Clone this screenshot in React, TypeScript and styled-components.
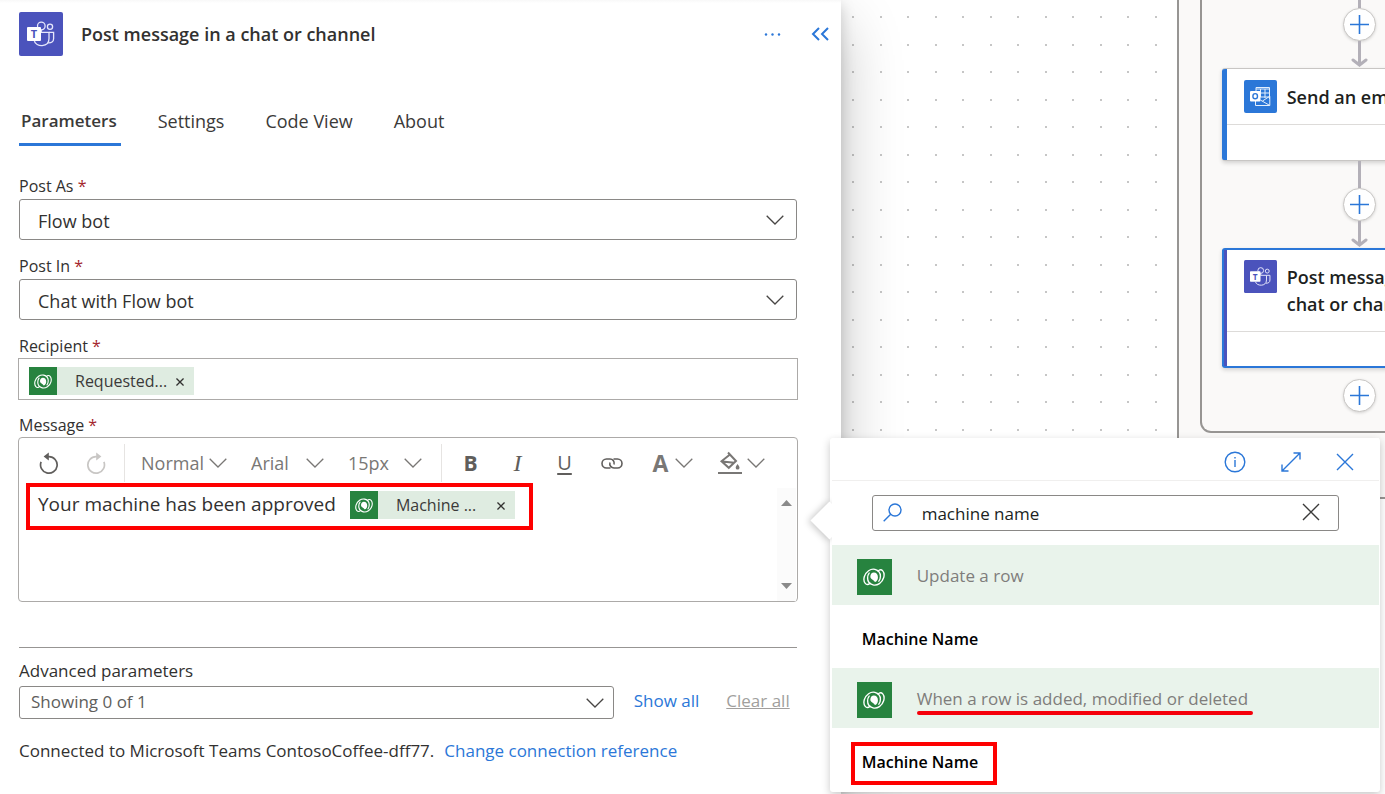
import React from 'react';
import styled, { createGlobalStyle, css } from 'styled-components';

const font = `"Open Sans", "Noto Sans", sans-serif`;
const blue = '#2b77d8';
const green = '#27833f';
const purple = '#4b53bc';

const GlobalStyle = createGlobalStyle`
  *, *::before, *::after { box-sizing: border-box; }
  body {
    margin: 0;
    background: #fff;
    color: #323130;
    font-family: ${font};
    font-size: 17px;
  }
  button, select, input { font: inherit; color: inherit; }
  svg { display: block; flex: none; }
`;

/* ---------- page ---------- */

const Page = styled.div`
  position: relative;
  display: flex;
  min-height: 100vh;
  overflow: hidden;
`;

const Panel = styled.main`
  position: relative;
  z-index: 1;
  flex: 0 0 60.7%;
  min-width: 0;
  background: linear-gradient(#f8f8f8, #fff 3px);
  box-shadow: 0 26px 58px rgba(0, 0, 0, 0.24), 0 5px 14px rgba(0, 0, 0, 0.18);
`;

const PanelHeader = styled.header`
  display: flex;
  align-items: center;
  padding: 12px 12px 0 19px;
`;

const Title = styled.h1`
  flex: 1;
  margin: 0 0 0 18px;
  font-size: 18px;
  font-weight: 600;
  line-height: 24px;
`;

const IconButton = styled.button<{ $ml?: number }>`
  display: flex;
  align-items: center;
  justify-content: center;
  margin: 0 0 0 ${(p) => p.$ml ?? 0}px;
  padding: 0;
  border: 0;
  background: none;
  color: ${blue};
  cursor: pointer;
`;

const Tabs = styled.div`
  display: flex;
  gap: 35px;
  margin: 53px 44px 14px 19px;
`;

const Tab = styled.button<{ $active?: boolean }>`
  padding: 0 4px 10px 2px;
  border: 0;
  border-bottom: 3px solid ${(p) => (p.$active ? blue : 'transparent')};
  background: none;
  color: #3b3a39;
  font-size: ${(p) => (p.$active ? 17 : 18)}px;
  font-weight: ${(p) => (p.$active ? 600 : 400)};
  line-height: 24px;
  cursor: pointer;
`;

/* ---------- form ---------- */

const Form = styled.form`
  padding: 0 44px 24px 19px;
`;

const Field = styled.div`
  display: flex;
  flex-direction: column;
  gap: 2px;
  padding-top: 15px;
`;

const Label = styled.label`
  font-size: 16px;
  line-height: 22px;
`;

const Required = styled.span`
  color: #a4262c;
`;

const SelectBox = styled.div<{ $small?: boolean }>`
  display: grid;
  align-items: center;
  flex: ${(p) => (p.$small ? '1' : 'none')};
  height: ${(p) => (p.$small ? 33 : 41)}px;
  border: 1px solid #8a8886;
  border-radius: 3px;
  > * { grid-area: 1 / 1; }
  > svg {
    justify-self: end;
    margin-right: ${(p) => (p.$small ? 9 : 12)}px;
    pointer-events: none;
  }
`;

const Select = styled.select<{ $small?: boolean }>`
  width: 100%;
  height: 100%;
  padding: ${(p) => (p.$small ? '0 32px 2px 11px' : '2px 32px 0 18px')};
  border: 0;
  background: none;
  color: ${(p) => (p.$small ? '#605e5c' : '#323130')};
  font-size: ${(p) => (p.$small ? 17 : 18)}px;
  appearance: none;
`;

const RichBox = styled.div`
  margin: -1px;
  border: 1px solid #acaaa8;
`;

const RecipientBox = styled(RichBox)`
  height: 42px;
  padding: 8px 10px;
`;

const EditorBox = styled(RichBox)`
  display: flex;
  flex-direction: column;
  height: 165px;
  border-radius: 4px;
`;

const TokenPill = styled.span`
  display: inline-flex;
  align-items: center;
  width: 165px;
  height: 28px;
  background: #dfece1;
  color: #3b3a39;
  font-size: 16px;
  line-height: 28px;
  vertical-align: top;
`;

const TokenIcon = styled.span`
  display: flex;
  align-items: center;
  justify-content: center;
  width: 28px;
  height: 100%;
  background: ${green};
`;

const TokenText = styled.span`
  flex: 1;
  padding-left: 18px;
`;

const TokenRemove = styled.button`
  display: flex;
  margin: 2px 10px 0 0;
  padding: 0;
  border: 0;
  background: none;
`;

const Toolbar = styled.div`
  display: flex;
  align-items: center;
  flex: none;
  height: 50px;
  padding-left: 6px;
  color: #605e5c;
`;

const ToolButton = styled.button<{ $faded?: boolean }>`
  display: flex;
  align-items: center;
  justify-content: center;
  width: 47px;
  height: 32px;
  padding: 0;
  border: 0;
  background: none;
  color: ${(p) => (p.$faded ? '#c8c6c4' : '#605e5c')};
  font-size: 22px;
  line-height: 32px;
`;

const ColorButton = styled(ToolButton)`
  justify-content: flex-start;
  width: 67px;
  padding-left: 16px;
  gap: 5px;
`;

const Bold = styled.b`
  font-weight: 700;
  font-size: 21px;
`;

const Italic = styled.i`
  font-family: "Liberation Serif", serif;
  font-size: 24px;
`;

const Underline = styled.u`
  font-size: 20px;
  text-underline-offset: 3px;
`;

const FontColor = styled.b`
  width: 19px;
  color: #797775;
  font-size: 23px;
`;

const Separator = styled.span<{ $after?: boolean }>`
  width: 1px;
  height: 38px;
  margin: ${(p) => (p.$after ? '0 5px 0 0' : '0 16px 0 5px')};
  background: #e6e4e2;
`;

const ToolSelectBox = styled.span<{ $width: number; $end: number }>`
  display: grid;
  align-items: center;
  width: ${(p) => p.$width}px;
  padding-right: ${(p) => p.$end}px;
  > * { grid-area: 1 / 1; }
  > svg { justify-self: end; pointer-events: none; }
`;

const ToolSelect = styled.select`
  width: 100%;
  padding: 0;
  border: 0;
  background: none;
  color: #797775;
  font-size: 18px;
  appearance: none;
`;

const EditorBody = styled.div`
  display: flex;
  flex: 1;
  min-height: 0;
`;

const EditorText = styled.div`
  flex: 1;
  padding: 2px 0 0 19px;
  font-size: 19px;
  line-height: 28px;
  outline: none;
`;

const redBox = css`
  content: '';
  position: absolute;
  border: 4px solid #fe0000;
  pointer-events: none;
`;

const MarkedLine = styled.span`
  position: relative;
  display: inline-flex;
  align-items: flex-start;
  gap: 14px;
  &::after {
    ${redBox}
    inset: -8px -18px -11px -12px;
  }
`;

const MessageText = styled.span`
  line-height: 26px;
  white-space: nowrap;
`;

const ScrollRail = styled.div`
  display: flex;
  flex-direction: column;
  align-items: center;
  justify-content: space-between;
  width: 19px;
  margin-right: 1px;
  padding: 12px 0;
  background: #fbfbfb;
`;

const Divider = styled.hr`
  height: 1px;
  margin: 46px 0 12px;
  border: 0;
  background: #979593;
`;

const AdvancedLabel = styled.label`
  display: block;
  margin-bottom: 4px;
  font-size: 17px;
  line-height: 22px;
`;

const AdvancedRow = styled.div`
  display: flex;
  align-items: center;
  padding-right: 7px;
`;

const LinkButton = styled.button`
  margin-left: 20px;
  padding: 0 0 4px;
  border: 0;
  background: none;
  color: ${blue};
  font-size: 17px;
  line-height: 24px;
  &:disabled {
    margin-left: 27px;
    color: #a19f9d;
    text-decoration: underline;
  }
`;

const Connection = styled.p`
  display: flex;
  gap: 10px;
  margin: 20px 0 0;
  font-size: 17px;
  line-height: 24px;
  white-space: nowrap;
`;

const Link = styled.a`
  color: ${blue};
  text-decoration: none;
`;

/* ---------- designer canvas ---------- */

const dot = (x: number, y: number) =>
  `radial-gradient(circle at ${x}px ${y}px, #c6c6c6 1px, transparent 1px) 0 0 / 55px 55px`;

const Canvas = styled.section`
  position: relative;
  flex: 1;
  overflow: hidden;
  background: ${[dot(12, 17), dot(40, 17), dot(12, 45), dot(40, 45)].join(',')};
`;

const OuterScope = styled.div`
  position: absolute;
  top: 0;
  left: 336px;
  padding: 0 21px 64px;
  border: 2px solid #979593;
  border-top: 0;
  background: #faf9f8;
`;

const InnerScope = styled.div`
  display: flex;
  flex-direction: column;
  align-items: center;
  padding: 0 20px 19px;
  border: 2px solid #979593;
  border-top: 0;
  border-radius: 0 0 11px 11px;
`;

const Stub = styled.span<{ $height: number }>`
  width: 3px;
  height: ${(p) => p.$height}px;
  background: #b3b0b8;
`;

const AddButton = styled.button<{ $mt?: number }>`
  display: flex;
  align-items: center;
  justify-content: center;
  width: 33px;
  height: 33px;
  margin: ${(p) => p.$mt ?? 0}px 0 0;
  padding: 0;
  border: 1px solid #c8c6c4;
  border-radius: 50%;
  background: #fff;
  box-shadow: 0 1px 3px rgba(0, 0, 0, 0.15);
  color: ${blue};
`;

const Card = styled.article<{ $selected?: boolean; $brand: string }>`
  width: 275px;
  border: ${(p) => (p.$selected ? `2px solid ${blue}` : '1px solid #c8c6c4')};
  border-left: 0;
  border-radius: 3px;
  background:
    linear-gradient(${blue}, ${blue}) 0 0 / ${(p) => (p.$selected ? 2 : 0)}px 100% no-repeat,
    linear-gradient(${(p) => p.$brand}, ${(p) => p.$brand}) 0 0 / 5px 100% no-repeat,
    #fff;
  box-shadow: 0 2px 4px rgba(0, 0, 0, 0.16);
`;

const CardHead = styled.div<{ $selected?: boolean }>`
  display: flex;
  gap: 10px;
  margin-left: 5px;
  padding: ${(p) => (p.$selected ? 10 : 11)}px 14px 11px 17px;
  border-bottom: 1px solid #dddbd9;
`;

const CardTitle = styled.h2`
  margin: 4px 0 2px;
  color: #201f1e;
  font-size: 18px;
  font-weight: 600;
  line-height: 27px;
`;

const CardFoot = styled.div<{ $selected?: boolean }>`
  height: ${(p) => (p.$selected ? 34 : 35)}px;
`;

/* ---------- dynamic content picker ---------- */

const Picker = styled.aside`
  position: absolute;
  z-index: 2;
  top: 438px;
  left: calc(60.7% - 11px);
  right: 5px;
  padding: 0 1px 1px 2px;
  border-radius: 3px;
  background: #fff;
  box-shadow: 0 3px 9px rgba(0, 0, 0, 0.22);
`;

const Beak = styled.span`
  position: absolute;
  z-index: -1;
  top: 69px;
  left: -14px;
  width: 27px;
  height: 27px;
  background: #fff;
  box-shadow: -1px 2px 7px rgba(0, 0, 0, 0.22);
  transform: rotate(45deg);
`;

const PickerBody = styled.div`
  background: #fff;
`;

const PickerBar = styled.div`
  display: flex;
  align-items: center;
  justify-content: flex-end;
  gap: 35px;
  height: 43px;
  padding: 5px 25px 0 0;
  border-bottom: 1px solid #f0efee;
`;

const Search = styled.div`
  display: flex;
  align-items: center;
  height: 36px;
  margin: 14px 40px;
  padding: 0 18px 2px 10px;
  border: 1px solid #8a8886;
  border-radius: 3px;
`;

const SearchInput = styled.input`
  flex: 1;
  min-width: 0;
  margin-left: 20px;
  padding: 2px 0 0;
  border: 0;
  outline: 0;
  background: none;
  color: #201f1e;
  font-size: 17px;
`;

const GroupHead = styled.div`
  display: flex;
  align-items: center;
  gap: 25px;
  height: 60px;
  padding: 4px 25px 0;
  background: #e9f3eb;
  color: #7f7d7b;
  font-size: 17px;
`;

const GroupIcon = styled.span`
  display: flex;
  align-items: center;
  justify-content: center;
  width: 35px;
  height: 36px;
  background: ${green};
`;

const GroupName = styled.span<{ $marked?: boolean }>`
  position: relative;
  margin-top: -2px;
  line-height: 24px;
  &::after {
    content: '';
    display: ${(p) => (p.$marked ? 'block' : 'none')};
    position: absolute;
    left: 0;
    right: -5px;
    bottom: -4px;
    height: 4px;
    border-radius: 2px;
    background: #f5000a;
  }
`;

const Item = styled.button<{ $marked?: boolean }>`
  display: block;
  width: 100%;
  height: 63px;
  padding: 4px 30px 0;
  border: 0;
  background: none;
  color: #000;
  font-size: 16px;
  font-weight: 600;
  line-height: 24px;
  text-align: left;
  span { position: relative; }
  span::after {
    ${redBox}
    display: ${(p) => (p.$marked ? 'block' : 'none')};
    inset: -9px -19px -12px -11px;
  }
`;

/* ---------- drawings ---------- */

const Chevron = ({ color = '#484644' }: { color?: string }) => (
  <svg width="18" height="10" viewBox="0 0 18 10" fill="none" stroke={color} strokeWidth="1.3">
    <path d="M.7.8 9 9 17.3.8" />
  </svg>
);

const Cross = ({ size, width = 1.4, color = 'currentColor' }: { size: number; width?: number; color?: string }) => (
  <svg width={size} height={size} viewBox="0 0 18 18" fill="none" stroke={color} strokeWidth={width}>
    <path d="m1 1 16 16M17 1 1 17" />
  </svg>
);

const TeamsIcon = ({ size }: { size: number }) => (
  <svg width={size} height={size} viewBox="0 0 44 44">
    <rect width="44" height="44" rx="2" fill={purple} />
    <g fill="none" stroke="#e6e7fb" strokeWidth="1.3">
      <circle cx="22.3" cy="14" r="3.8" />
      <circle cx="31" cy="14.8" r="2.6" />
      <path d="M22 20.4h8v6.2c0 9.6-13.5 8.2-14.6 2.6" />
      <path d="M30 20.4h4.6v6.3c0 3.2-2.3 4.4-5.4 4.2M22.3 17.8c0 1 .2 1.8-.3 2.6" />
    </g>
    <rect x="8" y="15" width="14" height="14" rx="1" fill="#fff" />
    <text x="15" y="26" textAnchor="middle" fontFamily="Open Sans, sans-serif" fontWeight="700" fontSize="11" fill={purple}>T</text>
  </svg>
);

const OutlookIcon = () => (
  <svg width="33" height="33" viewBox="0 0 33 33">
    <rect width="33" height="33" rx="2" fill={blue} />
    <g fill="none" stroke="#e4effc" strokeWidth="1">
      <path d="M12 12V7.5h13.5V19M12 9h13.5M16.5 9v8M21 9v9M12 13h13.5M16 17h9.5" />
      <path d="M11.5 21v4.5h14.3v-9.3L18.5 21M25.5 25.3l-9-5.2" />
    </g>
    <rect x="6" y="11" width="10.5" height="10.5" rx="1" fill="#fff" />
    <ellipse cx="11.2" cy="16.2" rx="2.3" ry="2.6" fill="none" stroke={blue} strokeWidth="1.4" />
  </svg>
);

const Swirl = ({ width }: { width: number }) => (
  <svg width={width} height={(width * 20) / 24} viewBox="0 0 24 20" fill="none" stroke="#fff" strokeLinecap="round">
    <path strokeWidth="1.5" d="M7.6 16.6C3.8 20.6-.2 15.500 1.400 9.600 3 3.800 8.500.400 13 1.500c3.800 1 6 4 6 7.500 0 2.200-.600 4-1.700 5.400" />
    <path strokeWidth="1.5" d="M16.400 3.400c3.800-4 7.800 1.100 6.200 7C21 16.200 15.500 19.600 11 18.500c-3.800-1-6-4-6-7.500 0-2.200.600-4 1.700-5.400" />
    <path fill="#fff" stroke="none" d="M8 9.400C8 6.800 9.700 5 11.900 5c2.600 0 4.400 2.100 4.400 5 0 2.700-1.200 4.600-3.200 5.200-.800-.500-1.100-1.400-2.200-2C9.200 12.300 8 11.300 8 9.400z" />
  </svg>
);

const Rotate = ({ flip }: { flip?: boolean }) => (
  <svg width="20" height="23" viewBox="0 0 20 23" fill="none" stroke="currentColor" strokeWidth="1.700">
    <g transform={flip ? 'matrix(-1 0 0 1 20 0)' : undefined}>
      <path d="M8.500 4.600h1.500a8.300 8.300 0 1 1-7.900 5.300" />
      <path fill="currentColor" stroke="none" d="m4.600 4.500 5.200-4v8z" />
    </g>
  </svg>
);

const LinkGlyph = () => (
  <svg width="22" height="13" viewBox="0 0 22 13" fill="none" stroke="currentColor" strokeWidth="1.600">
    <path d="M9.500 11H5.500a4.500 4.500 0 0 1 0-9H9a4.200 4.200 0 0 1 4 5.500M12.500 2h4a4.500 4.500 0 0 1 0 9H13a4.200 4.200 0 0 1-4-5.500" />
  </svg>
);

const Bucket = () => (
  <svg width="24" height="24" viewBox="0 0 24 24" fill="none" stroke="#797775" strokeWidth="2">
    <path d="M10 1.500 18 10l-7.200 6.800-7.300-6.600L12 3.500M4 10.600l12.500 1.200" />
    <path fill="#797775" stroke="none" d="M19.500 13c1.500 2 2 2.900 2 3.700a1.900 1.900 0 0 1-3.800 0c0-.800.500-1.700 1.800-3.700zM0 21h24v2H0z" />
  </svg>
);

const ArrowDown = () => (
  <svg width="17" height="27" viewBox="0 0 17 27" fill="none" stroke="#b3b0b8" strokeWidth="3">
    <path d="M8.500 0v24" />
    <path strokeLinecap="round" d="m2 19 6.500 5 6.500-5" />
  </svg>
);

const PlusGlyph = () => (
  <svg width="19" height="19" viewBox="0 0 19 19" fill="none" stroke="currentColor" strokeWidth="1.600">
    <path d="M9.500 0v19M0 9.500h19" />
  </svg>
);

const Triangle = ({ down }: { down?: boolean }) => (
  <svg width="11" height="6" viewBox="0 0 11 6" fill="#8a8a8a">
    <path d={down ? 'M0 0h11L5.500 6z' : 'M0 6h11L5.500 0z'} />
  </svg>
);

/* ---------- parts ---------- */

const Token = ({ text }: { text: string }) => (
  <TokenPill contentEditable={false}>
    <TokenIcon><Swirl width={18} /></TokenIcon>
    <TokenText>{text}</TokenText>
    <TokenRemove type="button" aria-label="Remove">
      <Cross size={8} width={3} color="#323130" />
    </TokenRemove>
  </TokenPill>
);

const FieldLabel = ({ id, htmlFor, children }: { id?: string; htmlFor?: string; children: string }) => (
  <Label id={id} htmlFor={htmlFor}>
    {children} <Required>*</Required>
  </Label>
);

const ToolbarSelect = ({ label, value, width, end }: { label: string; value: string; width: number; end: number }) => (
  <ToolSelectBox $width={width} $end={end}>
    <ToolSelect aria-label={label}>
      <option>{value}</option>
    </ToolSelect>
    <Chevron color="#797775" />
  </ToolSelectBox>
);

const tabs = ['Parameters', 'Settings', 'Code View', 'About'];

export default function App() {
  return (
    <Page>
      <GlobalStyle />
      <Panel>
        <PanelHeader>
          <TeamsIcon size={44} />
          <Title>Post message in a chat or channel</Title>
          <IconButton aria-label="More">
            <svg width="17" height="3" viewBox="0 0 17 3" fill="currentColor">
              <circle cx="2" cy="1.5" r="1.200" />
              <circle cx="8.500" cy="1.500" r="1.200" />
              <circle cx="15" cy="1.500" r="1.200" />
            </svg>
          </IconButton>
          <IconButton aria-label="Collapse" $ml={30}>
            <svg width="18" height="14" viewBox="0 0 18 14" fill="none" stroke="currentColor" strokeWidth="2">
              <path d="M8 1 2 7l6 6M17 1l-6 6 6 6" />
            </svg>
          </IconButton>
        </PanelHeader>
        <Tabs role="tablist">
          {tabs.map((t, i) => (
            <Tab key={t} role="tab" aria-selected={i === 0} $active={i === 0}>{t}</Tab>
          ))}
        </Tabs>
        <Form>
          <Field>
            <FieldLabel htmlFor="post-as">Post As</FieldLabel>
            <SelectBox>
              <Select id="post-as"><option>Flow bot</option></Select>
              <Chevron />
            </SelectBox>
          </Field>
          <Field>
            <FieldLabel htmlFor="post-in">Post In</FieldLabel>
            <SelectBox>
              <Select id="post-in"><option>Chat with Flow bot</option></Select>
              <Chevron />
            </SelectBox>
          </Field>
          <Field>
            <FieldLabel id="recipient-label">Recipient</FieldLabel>
            <RecipientBox role="textbox" aria-labelledby="recipient-label">
              <Token text="Requested..." />
            </RecipientBox>
          </Field>
          <Field>
            <FieldLabel id="message-label">Message</FieldLabel>
            <EditorBox>
              <Toolbar role="toolbar" aria-label="Formatting">
                <ToolButton type="button" aria-label="Undo"><Rotate /></ToolButton>
                <ToolButton type="button" aria-label="Redo" $faded><Rotate flip /></ToolButton>
                <Separator />
                <ToolbarSelect label="Style" value="Normal" width={110} end={24} />
                <ToolbarSelect label="Font" value="Arial" width={97} end={24} />
                <ToolbarSelect label="Size" value="15px" width={93} end={19} />
                <Separator $after />
                <ToolButton type="button"><Bold>B</Bold></ToolButton>
                <ToolButton type="button"><Italic>I</Italic></ToolButton>
                <ToolButton type="button"><Underline>U</Underline></ToolButton>
                <ToolButton type="button" aria-label="Link"><LinkGlyph /></ToolButton>
                <ColorButton type="button"><FontColor>A</FontColor><Chevron color="#797775" /></ColorButton>
                <ColorButton type="button" aria-label="Fill"><Bucket /><Chevron color="#797775" /></ColorButton>
              </Toolbar>
              <EditorBody>
                <EditorText role="textbox" aria-multiline="true" aria-labelledby="message-label">
                  <MarkedLine>
                    <MessageText>Your machine has been approved</MessageText>
                    <Token text="Machine ..." />
                  </MarkedLine>
                </EditorText>
                <ScrollRail><Triangle /><Triangle down /></ScrollRail>
              </EditorBody>
            </EditorBox>
          </Field>
          <Divider />
          <AdvancedLabel htmlFor="advanced">Advanced parameters</AdvancedLabel>
          <AdvancedRow>
            <SelectBox $small>
              <Select id="advanced" $small><option>Showing 0 of 1</option></Select>
              <Chevron />
            </SelectBox>
            <LinkButton type="button">Show all</LinkButton>
            <LinkButton type="button" disabled>Clear all</LinkButton>
          </AdvancedRow>
          <Connection>
            <span>Connected to Microsoft Teams ContosoCoffee-dff77.</span>
            <Link href="#connection">Change connection reference</Link>
          </Connection>
        </Form>
      </Panel>

      <Canvas>
        <OuterScope>
          <InnerScope>
            <Stub $height={8} />
            <AddButton aria-label="Add"><PlusGlyph /></AddButton>
            <ArrowDown />
            <Card $brand={blue}>
              <CardHead>
                <OutlookIcon />
                <CardTitle>Send an email (V2)</CardTitle>
              </CardHead>
              <CardFoot />
            </Card>
            <Stub $height={27} />
            <AddButton aria-label="Add"><PlusGlyph /></AddButton>
            <ArrowDown />
            <Card $brand={purple} $selected>
              <CardHead $selected>
                <TeamsIcon size={33} />
                <CardTitle>Post message in a chat or channel</CardTitle>
              </CardHead>
              <CardFoot $selected />
            </Card>
            <AddButton aria-label="Add" $mt={11}><PlusGlyph /></AddButton>
          </InnerScope>
        </OuterScope>
      </Canvas>

      <Picker>
        <Beak />
        <PickerBody>
          <PickerBar>
            <IconButton aria-label="Info">
              <svg width="22" height="22" viewBox="0 0 22 22" fill="none" stroke="currentColor" strokeWidth="1.400">
                <circle cx="11" cy="11" r="9.800" />
                <path d="M11 9v7M11 6v1.600" />
              </svg>
            </IconButton>
            <IconButton aria-label="Expand">
              <svg width="20" height="20" viewBox="0 0 20 20" fill="none" stroke="currentColor" strokeWidth="1.400">
                <path d="M1 19 19 1M12.500 1H19v6.500M1 12.500V19h6.500" />
              </svg>
            </IconButton>
            <IconButton aria-label="Close"><Cross size={18} /></IconButton>
          </PickerBar>
          <Search>
            <svg width="19" height="19" viewBox="0 0 19 19" fill="none" stroke={blue} strokeWidth="1.400">
              <circle cx="12" cy="7" r="6" />
              <path d="M7.700 11.300.700 18.300" />
            </svg>
            <SearchInput aria-label="Search" defaultValue="machine name" />
            <IconButton aria-label="Clear"><Cross size={18} color="#3b3a39" /></IconButton>
          </Search>
          <GroupHead>
            <GroupIcon><Swirl width={22} /></GroupIcon>
            <GroupName>Update a row</GroupName>
          </GroupHead>
          <Item><span>Machine Name</span></Item>
          <GroupHead>
            <GroupIcon><Swirl width={22} /></GroupIcon>
            <GroupName $marked>When a row is added, modified or deleted</GroupName>
          </GroupHead>
          <Item $marked><span>Machine Name</span></Item>
        </PickerBody>
      </Picker>
    </Page>
  );
}
